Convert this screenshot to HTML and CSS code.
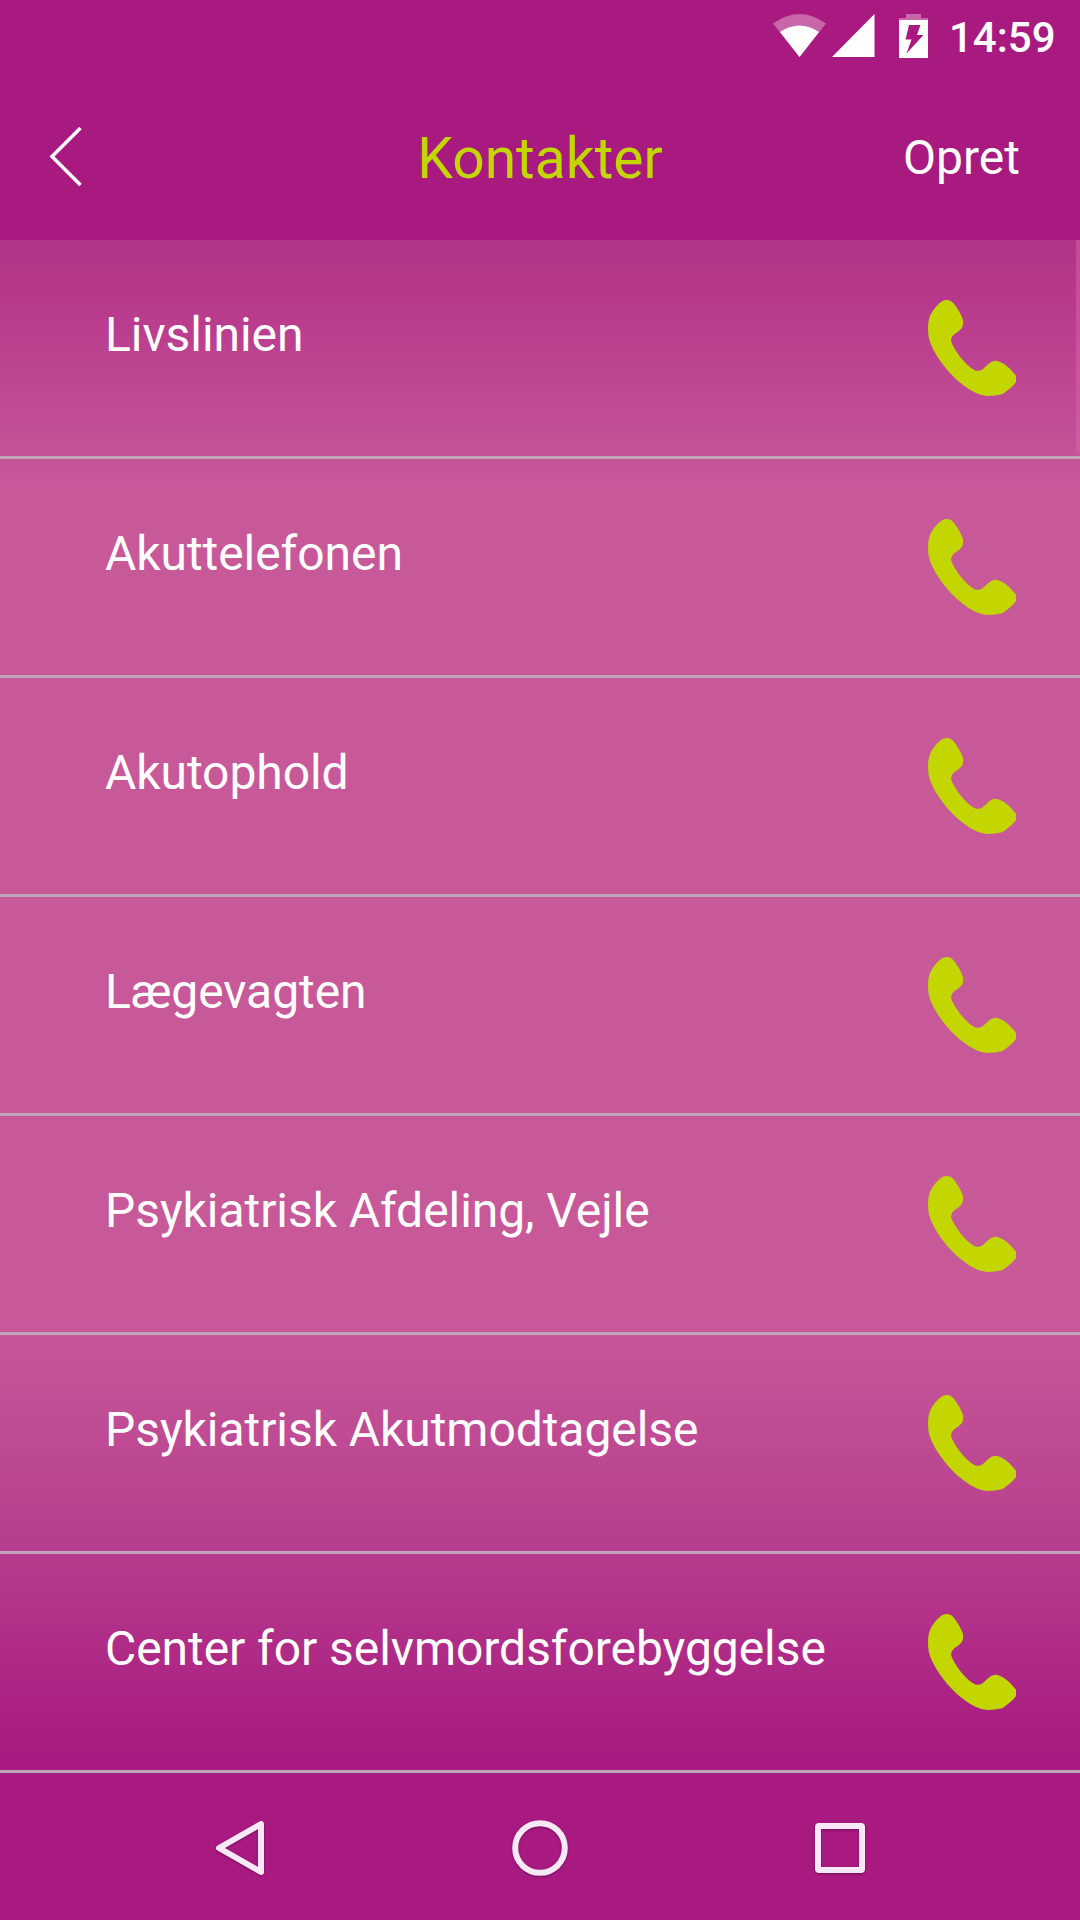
FILE: index.html
```html
<!DOCTYPE html>
<html lang="da">
<head>
    <meta charset="UTF-8">
    <meta name="viewport" content="width=device-width, initial-scale=1.0">
    <title>Kontakter</title>
    <link rel="stylesheet" href="styles.css">
</head>
<body>

    <!-- Shared phone icon -->
    <svg class="symbols" width="0" height="0">
        <symbol id="phone" viewBox="0 0 264 288">
            <path d="M58 0Q68 0 76 9Q96 34 105 60Q107 75 101 85Q94 94 79 103Q68 112 69 123Q75 142 96 170Q118 198 139 210Q152 216 164 208C178 195 188 182 204 182C228 186 248 206 264 227V246C254 260 236 274 222 283Q201 288 181 288C146 286 118 266 86 239C46 202 11 152 2 112Q-1 90 1 68C5 40 21 20 42 4Q49 0 58 0Z"/>
        </symbol>
    </svg>

    <div class="status-bar">
        <svg class="wifi" width="54" height="44" viewBox="0 0 54 44">
            <path class="faded" d="M0 9.500Q26.500-9.500 53 9.500L26.500 43Z"/>
            <path d="M7 18Q26.500 5 46 18L26.500 43Z"/>
        </svg>
        <svg class="signal" width="43" height="43" viewBox="0 0 43 43">
            <path d="M42.500 0V43H0Z"/>
        </svg>
        <svg class="battery" width="29" height="44" viewBox="0 0 29 44">
            <path class="faded" d="M7 0H22V4H29V6H0V4H7Z"/>
            <path fill-rule="evenodd" d="M0 6H29V44H0ZM10 11L6.500 25.500H12.500L7.500 39.500L24.500 21H18L21.500 11Z"/>
        </svg>
        <span class="time">14:59</span>
    </div>

    <div class="header">
        <a href="#" class="back">
            <svg width="34" height="62" viewBox="0 0 34 62">
                <path d="M32.500 2L4 30.500L32.500 59"/>
            </svg>
        </a>
        <h1>Kontakter</h1>
        <a href="#" class="create">Opret</a>
    </div>

    <div class="list">
        <div class="scrollbar"></div>
        <div class="row"><span>Livslinien</span><svg class="phone"><use href="#phone"/></svg></div>
        <div class="row"><span>Akuttelefonen</span><svg class="phone"><use href="#phone"/></svg></div>
        <div class="row"><span>Akutophold</span><svg class="phone"><use href="#phone"/></svg></div>
        <div class="row"><span>Lægevagten</span><svg class="phone"><use href="#phone"/></svg></div>
        <div class="row"><span>Psykiatrisk Afdeling, Vejle</span><svg class="phone"><use href="#phone"/></svg></div>
        <div class="row"><span>Psykiatrisk Akutmodtagelse</span><svg class="phone"><use href="#phone"/></svg></div>
        <div class="row"><span>Center for selvmordsforebyggelse</span><svg class="phone"><use href="#phone"/></svg></div>
    </div>

    <div class="nav-bar">
        <svg width="60" height="60" viewBox="0 0 60 60">
            <path d="M51 5V53L9 29Z"/>
        </svg>
        <svg width="60" height="60" viewBox="0 0 60 60">
            <circle cx="30" cy="29" r="24.800"/>
        </svg>
        <svg width="60" height="60" viewBox="0 0 60 60">
            <rect x="8" y="7" width="44" height="44" rx="1"/>
        </svg>
    </div>

</body>
</html>
```

FILE: styles.css
```css
body {
    margin: 0;
    width: 1080px;
    height: 1920px;
    overflow: hidden;
    display: flex;
    flex-direction: column;
    background: #a81a80;
    color: #fff;
    font-family: Roboto, sans-serif;
}

.symbols {
    position: absolute;
}

a {
    color: inherit;
    text-decoration: none;
}

.status-bar {
    height: 72px;
    box-sizing: border-box;
    padding: 14px 26px 0 0;
    display: flex;
    justify-content: flex-end;
    align-items: flex-start;
    fill: #fff;
}

.status-bar .faded {
    fill: #c965a9;
}

.status-bar .signal {
    margin-left: 5px;
}

.status-bar .battery {
    margin-left: 24px;
}

.status-bar .time {
    width: 105px;
    margin-left: 21px;
    font-size: 42px;
    line-height: 48px;
    font-weight: 500;
    white-space: nowrap;
}

.header {
    height: 168px;
    box-sizing: border-box;
    padding: 2px 60px 0 48px;
    display: grid;
    grid-template-columns: 1fr auto 1fr;
    align-items: center;
}

.header .back {
    height: 62px;
}

.header .back path {
    fill: none;
    stroke: #fff;
    stroke-width: 3.5;
}

.header h1 {
    margin: 2px 0 0 12px;
    color: #c3d600;
    font-size: 57px;
    font-weight: 400;
}

.header .create {
    font-size: 48px;
    text-align: right;
}

.list {
    position: relative;
    background: linear-gradient(#b23488 0, #b8398c 60px, #c75999 250px, #c75999 1080px, #b8408f 1290px, #a91c80 1500px, #a81a80 1533px);
}

.row {
    height: 219px;
    box-sizing: border-box;
    padding: 60px 64px 0 105px;
    display: flex;
    justify-content: space-between;
    align-items: flex-start;
    border-bottom: 3px solid #bfa5b9;
    font-size: 48px;
    line-height: 70px;
    letter-spacing: -0.06px;
    white-space: nowrap;
}

.row .phone {
    width: 88px;
    height: 96px;
    fill: #c3d600;
}

/* Sits over the right edge of the first row */
.scrollbar {
    position: absolute;
    top: 0;
    right: 0;
    width: 4px;
    height: 213px;
    background: rgba(215, 115, 165, 0.4);
}

.nav-bar {
    height: 147px;
    box-sizing: border-box;
    padding: 46px 210px 0;
    display: flex;
    justify-content: space-between;
}

.nav-bar svg {
    fill: none;
    stroke: #f7e8f5;
    stroke-width: 6;
    stroke-linejoin: round;
    filter: drop-shadow(0 1px 1px rgba(60, 0, 50, 0.5));
}
```
